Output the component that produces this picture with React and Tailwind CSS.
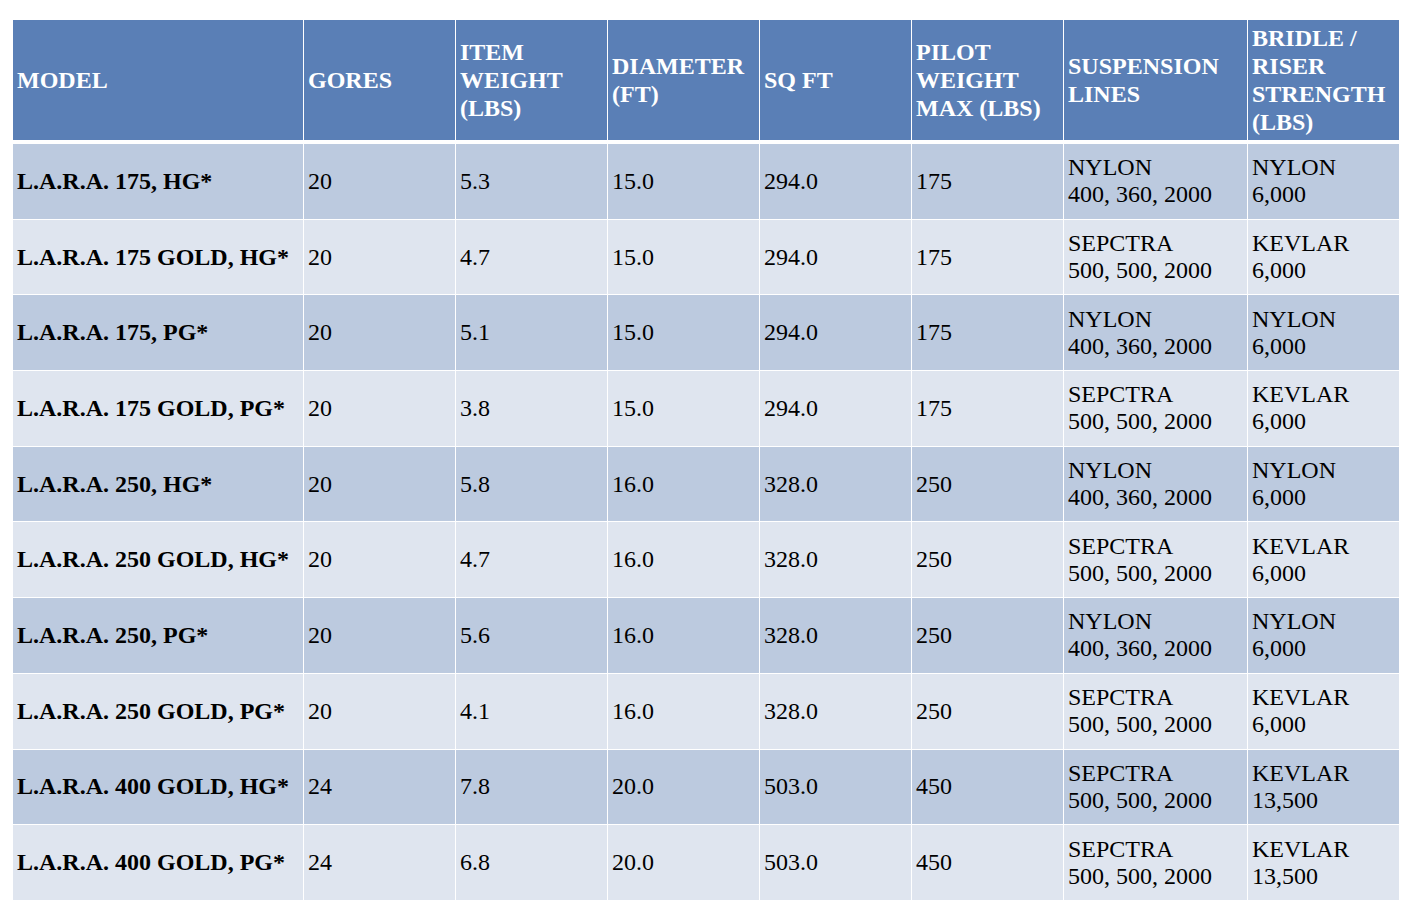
import React from 'react';

const cols = 'grid grid-cols-[290px_151px_151px_151px_151px_151px_183px_151px] gap-px';

const headers = [
    ['MODEL'],
    ['GORES'],
    ['ITEM', 'WEIGHT', '(LBS)'],
    ['DIAMETER', '(FT)'],
    ['SQ FT'],
    ['PILOT', 'WEIGHT', 'MAX (LBS)'],
    ['SUSPENSION', 'LINES'],
    ['BRIDLE /', 'RISER', 'STRENGTH', '(LBS)'],
];

const nylon = ['NYLON', '400, 360, 2000'];
const sepctra = ['SEPCTRA', '500, 500, 2000'];

const rows = [
    ['L.A.R.A. 175, HG*', '20', '5.3', '15.0', '294.0', '175', nylon, ['NYLON', '6,000']],
    ['L.A.R.A. 175 GOLD, HG*', '20', '4.7', '15.0', '294.0', '175', sepctra, ['KEVLAR', '6,000']],
    ['L.A.R.A. 175, PG*', '20', '5.1', '15.0', '294.0', '175', nylon, ['NYLON', '6,000']],
    ['L.A.R.A. 175 GOLD, PG*', '20', '3.8', '15.0', '294.0', '175', sepctra, ['KEVLAR', '6,000']],
    ['L.A.R.A. 250, HG*', '20', '5.8', '16.0', '328.0', '250', nylon, ['NYLON', '6,000']],
    ['L.A.R.A. 250 GOLD, HG*', '20', '4.7', '16.0', '328.0', '250', sepctra, ['KEVLAR', '6,000']],
    ['L.A.R.A. 250, PG*', '20', '5.6', '16.0', '328.0', '250', nylon, ['NYLON', '6,000']],
    ['L.A.R.A. 250 GOLD, PG*', '20', '4.1', '16.0', '328.0', '250', sepctra, ['KEVLAR', '6,000']],
    ['L.A.R.A. 400 GOLD, HG*', '24', '7.8', '20.0', '503.0', '450', sepctra, ['KEVLAR', '13,500']],
    ['L.A.R.A. 400 GOLD, PG*', '24', '6.8', '20.0', '503.0', '450', sepctra, ['KEVLAR', '13,500']],
];

const Cell = ({ value, bold, bg }) => (
    <div className={`${bg} h-[74.7px] flex flex-col justify-center pl-[4px] pr-1 text-[24px] leading-[27px] text-black ${bold ? 'font-bold' : ''}`}>
        {Array.isArray(value) ? value.map((v) => <div key={v}>{v}</div>) : value}
    </div>
);

const App = () => {
    return (
        <div className="min-h-screen bg-white pl-[13px] pt-[20px] font-['Liberation_Serif','Times_New_Roman',serif]">
            <div className="w-[1386px] bg-white">
                <div className={cols}>
                    {headers.map((h, i) => (
                        <div key={i} className="bg-[#5a7fb6] h-[120px] flex flex-col justify-center pl-[4px] text-white font-bold text-[24px] leading-[28px]">
                            {h.map((line) => <div key={line}>{line}</div>)}
                        </div>
                    ))}
                </div>
                <div className={`${cols} mt-[4px]`}>
                    {rows.map((r, ri) =>
                        r.map((v, ci) => (
                            <Cell
                                key={`${ri}-${ci}`}
                                value={v}
                                bold={ci === 0}
                                bg={ri % 2 === 0 ? 'bg-[#bccadf]' : 'bg-[#dfe5ef]'}
                            />
                        ))
                    )}
                </div>
            </div>
        </div>
    );
};

export default App;
